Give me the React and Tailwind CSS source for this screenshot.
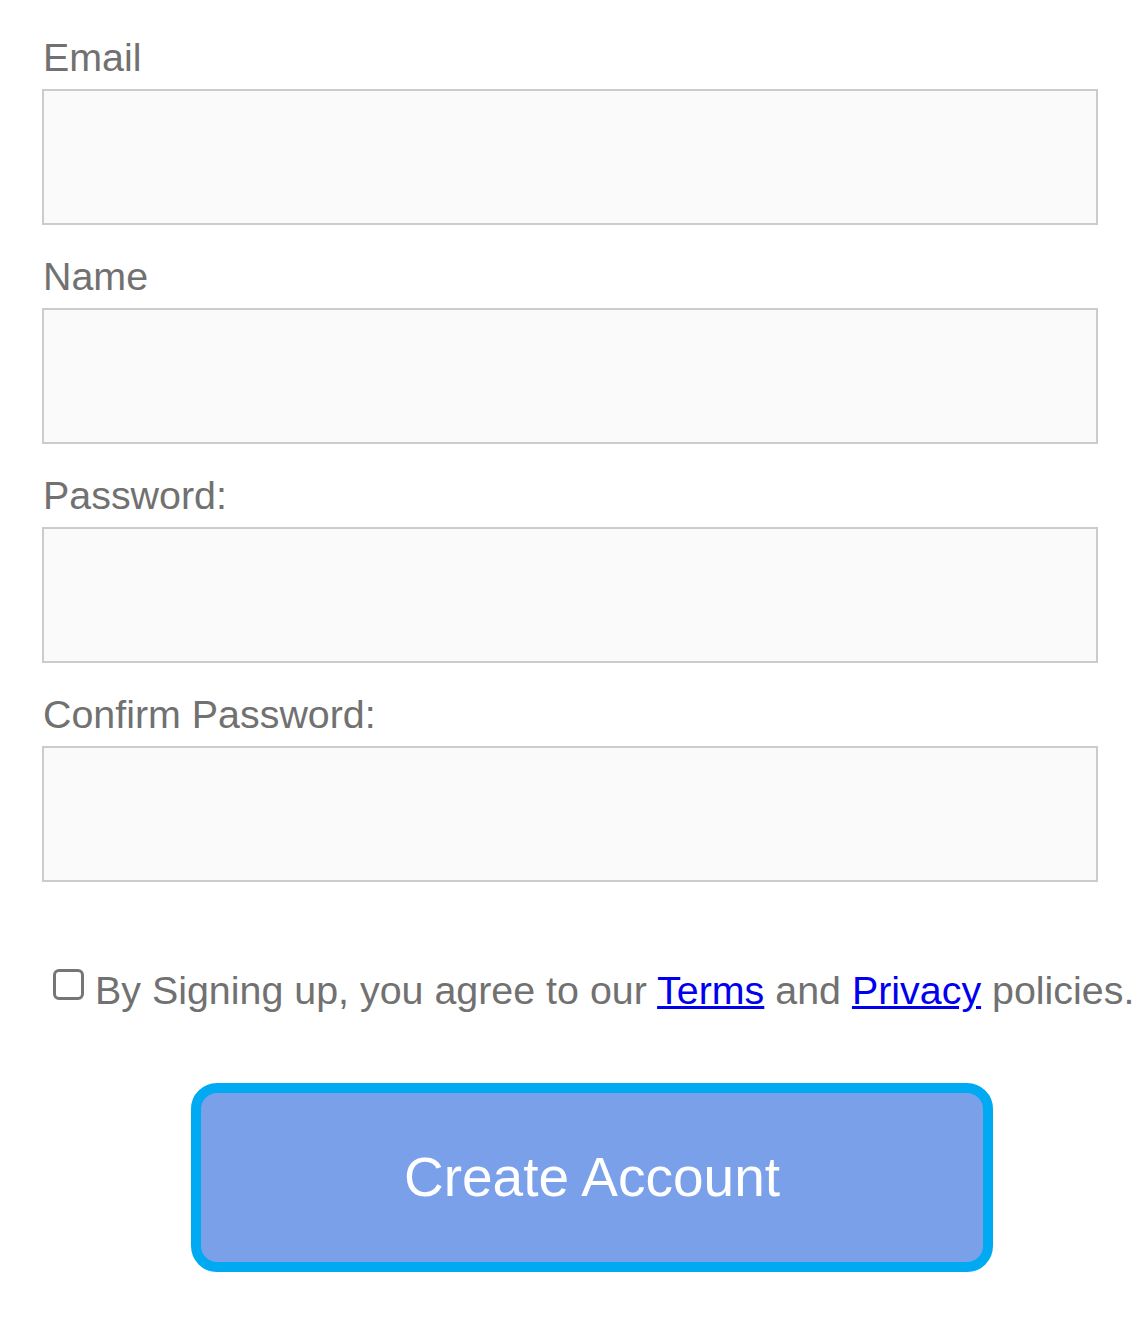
export default function App() {
  const fields = ["Email", "Name", "Password:", "Confirm Password:"];

  return (
    <div className="min-h-screen bg-white pl-[43px] pt-[35px] font-['Liberation_Sans',Arial,sans-serif] text-[#717171]">
      {fields.map((label, i) => (
        <div key={label} className={i > 0 ? "mt-[29px]" : ""}>
          <label className="block text-[39.4px] leading-[45px]">{label}</label>
          <input
            type={label.startsWith("Email") ? "email" : label.includes("Password") ? "password" : "text"}
            className="mt-[9px] block h-[136px] w-[1056px] -ml-px border-2 border-[#cccccc] bg-[#fafafa] outline-none"
          />
        </div>
      ))}

      {/* Agree */}
      <div className="mt-[86px] flex items-start text-[39.4px] leading-[45px] whitespace-nowrap">
        <input
          type="checkbox"
          className="mt-[1px] ml-[10px] mr-[11px] h-[31px] w-[31px] shrink-0 appearance-none rounded-[6px] border-[3px] border-[#767676] bg-white"
        />
        <span>
          By Signing up, you agree to our{" "}
          <a href="#" className="text-[#0000ee] underline">Terms</a> and{" "}
          <a href="#" className="text-[#0000ee] underline">Privacy</a> policies.
        </span>
      </div>

      <div className="mt-[70px] flex w-[1098px] justify-center">
        <button className="h-[189px] w-[802px] rounded-[26px] border-[10px] border-[#00aaf3] bg-[#7aa0ea] text-[55px] text-white">
          Create Account
        </button>
      </div>
    </div>
  );
}
